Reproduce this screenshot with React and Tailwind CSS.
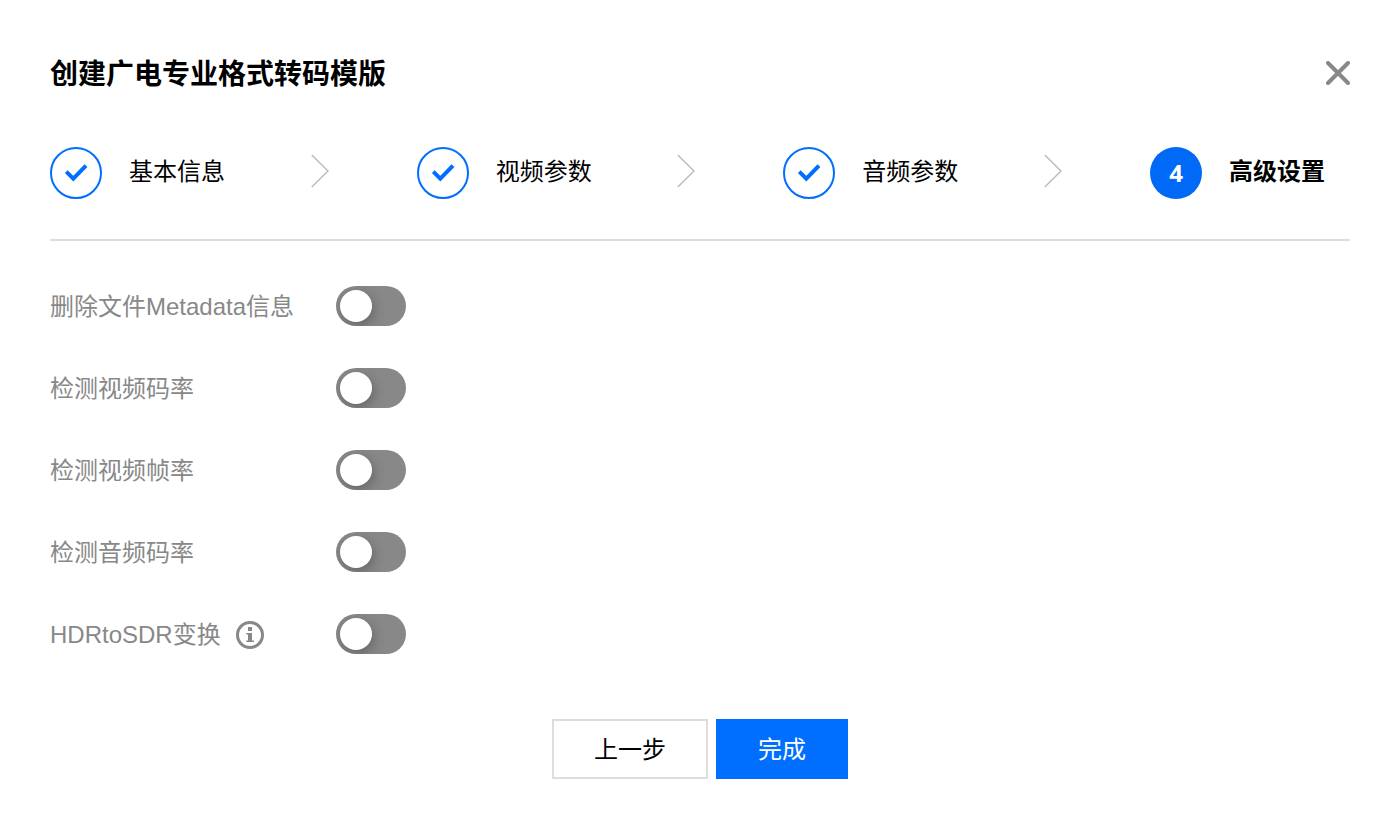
import React, { useState } from 'react';
import clsx from 'clsx';

const steps = ['基本信息', '视频参数', '音频参数', '高级设置'];
const current = 3;

const options = [
    { id: 'metadata', label: '删除文件Metadata信息' },
    { id: 'videoBitrate', label: '检测视频码率' },
    { id: 'videoFps', label: '检测视频帧率' },
    { id: 'audioBitrate', label: '检测音频码率' },
    { id: 'hdrToSdr', label: 'HDRtoSDR变换', info: true },
];

function CheckIcon() {
    return (
        <svg width="52" height="52" viewBox="0 0 52 52" fill="none" stroke="#006eff" aria-hidden="true">
            <circle cx="26" cy="26" r="25" strokeWidth="2" />
            <path d="M16.3 24.7 L23.3 31.7 L36 18.7" strokeWidth="4" />
        </svg>
    );
}

function ArrowIcon() {
    return (
        <svg width="18" height="34" viewBox="0 0 18 34" fill="none" stroke="#bbbbbb" strokeWidth="1.5" aria-hidden="true">
            <path d="M0.8 1 L17 17 L0.8 33" />
        </svg>
    );
}

function InfoIcon() {
    return (
        <svg width="28" height="28" viewBox="0 0 28 28" fill="none" aria-hidden="true">
            <circle cx="14" cy="14" r="12.5" stroke="#888888" strokeWidth="3" />
            <path d="M12 6h4v4h-4zM10.3 12H16v7.5h2V21h-7.7v-1.5H12v-6h-1.7z" fill="#888888" />
        </svg>
    );
}

function Step({ label, index }) {
    const active = index === current;
    const last = index === steps.length - 1;

    return (
        <li className={clsx('flex items-center', last ? 'w-50' : 'flex-1')} aria-current={active ? 'step' : undefined}>
            {active ? (
                <span className="flex h-13 w-13 items-center justify-center rounded-full bg-[#006af6] font-['Open_Sans',sans-serif] text-2xl font-bold text-white">
                    {index + 1}
                </span>
            ) : (
                <CheckIcon />
            )}
            <span className={clsx('ml-[27px] flex-1 pb-0.5 text-2xl', active && 'font-bold')}>{label}</span>
            {!last && (
                <span className="mr-[88px] pb-1">
                    <ArrowIcon />
                </span>
            )}
        </li>
    );
}

export default function App() {
    const [values, setValues] = useState({});

    const toggle = (id) => setValues({ ...values, [id]: !values[id] });

    return (
        <div className="bg-white pt-[53px] pr-12 pb-12 pl-[50px] font-['Liberation_Sans','Noto_Sans_CJK_SC',sans-serif] text-black">
            <header className="flex h-10 items-center justify-between">
                <h1 className="pt-1 text-[28px] font-bold">创建广电专业格式转码模版</h1>
                <button type="button" aria-label="关闭">
                    <svg width="24" height="24" viewBox="0 0 24 24" stroke="#888888" strokeWidth="4" strokeLinecap="round" aria-hidden="true">
                        <path d="M2 2 L22 22 M22 2 L2 22" />
                    </svg>
                </button>
            </header>

            <ol className="mt-[54px] flex border-b-2 border-[#dddddd] pb-10">
                {steps.map((label, index) => (
                    <Step key={label} label={label} index={index} />
                ))}
            </ol>

            <form onSubmit={(e) => e.preventDefault()}>
                <div className="mt-[45px] flex flex-col gap-[42px]">
                    {options.map((item) => (
                        <div key={item.id} className="flex h-10 items-center">
                            <div className="flex w-[286px] items-center gap-[15px] pt-0.5 text-2xl text-[#888888]">
                                <label htmlFor={item.id}>{item.label}</label>
                                {item.info && <InfoIcon />}
                            </div>
                            <input
                                id={item.id}
                                type="checkbox"
                                role="switch"
                                checked={!!values[item.id]}
                                onChange={() => toggle(item.id)}
                                className="flex h-10 w-[70px] cursor-pointer appearance-none items-center overflow-hidden rounded-full bg-[#888888] px-1 before:h-8 before:w-8 before:rounded-full before:bg-white before:shadow-[2px_4px_12px_rgba(0,0,0,0.25)] checked:justify-end checked:bg-[#006eff]"
                            />
                        </div>
                    ))}
                </div>

                <div className="mt-[65px] flex justify-center gap-2 text-2xl">
                    <button type="button" className="h-15 border-2 border-[#dddddd] bg-white px-10 pt-0.5">
                        上一步
                    </button>
                    <button type="submit" className="h-15 bg-[#006eff] px-[42px] pt-0.5 text-white">
                        完成
                    </button>
                </div>
            </form>
        </div>
    );
}
